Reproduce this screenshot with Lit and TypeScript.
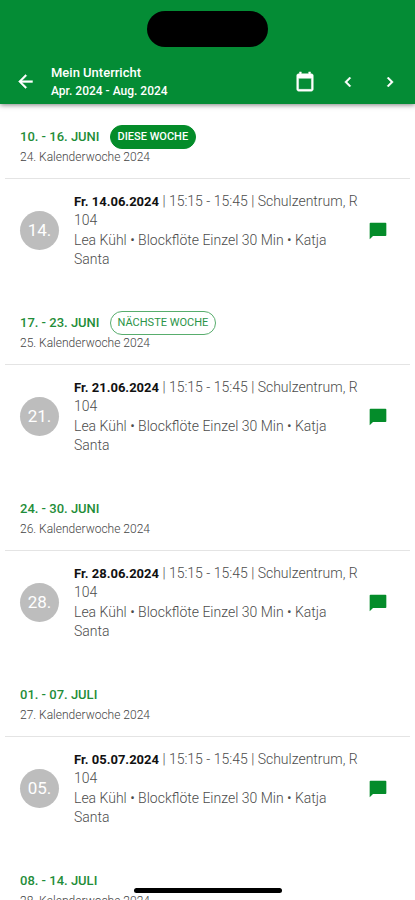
import { LitElement, html, css, nothing } from "lit";
import { customElement, property } from "lit/decorators.js";

interface Week {
  range: string;
  number: number;
  badge?: string;
  current?: boolean;
  day?: string;
  date?: string;
}

const weeks: Week[] = [
  { range: "10. - 16. JUNI", number: 24, badge: "DIESE WOCHE", current: true, day: "14.", date: "14.06.2024" },
  { range: "17. - 23. JUNI", number: 25, badge: "NÄCHSTE WOCHE", day: "21.", date: "21.06.2024" },
  { range: "24. - 30. JUNI", number: 26, day: "28.", date: "28.06.2024" },
  { range: "01. - 07. JULI", number: 27, day: "05.", date: "05.07.2024" },
  { range: "08. - 14. JULI", number: 28 },
];

@customElement("week-section")
export class WeekSection extends LitElement {
  @property({ attribute: false }) week!: Week;

  static styles = css`
    :host { display: block; }
    .head { padding: 20px 20px 13px; }
    .title { display: flex; align-items: center; gap: 10px; height: 24px; }
    .range { margin: 0; font-size: 13px; line-height: 22px; font-weight: 500; color: #1f8d39; }
    .badge {
      box-sizing: border-box;
      height: 24px;
      padding: 0 7px;
      border: 1px solid #58ad6d;
      border-radius: 12px;
      font-size: 11px;
      line-height: 22px;
      color: #2b9447;
    }
    .badge.current { background: #048c2a; border-color: #048c2a; color: #fff; font-weight: 500; }
    .number { margin: 0; font-size: 12px; line-height: 16px; font-weight: 300; color: #444; }
    .lesson {
      display: flex;
      align-items: center;
      margin: 0 5px;
      padding: 13px 15px 22px;
      border-top: 1px solid #e4e4e4;
    }
    .day {
      flex: none;
      width: 39px;
      height: 39px;
      border-radius: 50%;
      background: #bdbdbd;
      color: #fff;
      font-size: 17px;
      line-height: 39px;
      text-align: center;
    }
    .text { flex: 1; display: grid; gap: 1px; margin: 0 10px 0 15px; font-size: 14px; line-height: 19px; font-weight: 300; color: #4c4c4c; }
    .text p { margin: 0; white-space: nowrap; }
    .text b { font-size: 13px; font-weight: 700; color: #111; }
    .note { flex: none; border: 0; background: none; padding: 0; width: 20px; height: 20px; margin-right: 7px; }
    .note svg { display: block; fill: #048c2a; }
  `;

  render() {
    const w = this.week;
    return html`
      <header class="head">
        <div class="title">
          <h2 class="range">${w.range}</h2>
          ${w.badge ? html`<span class="badge ${w.current ? "current" : ""}">${w.badge}</span>` : nothing}
        </div>
        <p class="number">${w.number}. Kalenderwoche 2024</p>
      </header>
      ${w.date
        ? html`<article class="lesson">
            <div class="day">${w.day}</div>
            <div class="text">
              <p><b>Fr. ${w.date}</b> | 15:15 - 15:45 | Schulzentrum, R<br />104</p>
              <p>Lea Kühl • Blockflöte Einzel 30 Min • Katja<br />Santa</p>
            </div>
            <button class="note" aria-label="Nachricht">
              <svg width="20" height="20" viewBox="0 0 24 24"><path d="M21 2H3c-.6 0-1 .4-1 1v19l4-4h15c.6 0 1-.4 1-1V3c0-.6-.4-1-1-1z" /></svg>
            </button>
          </article>`
        : nothing}
    `;
  }
}

@customElement("app-root")
export class AppRoot extends LitElement {
  static styles = css`
    :host {
      display: flex;
      flex-direction: column;
      height: 100vh;
      position: relative;
      overflow: hidden;
      background: #fff;
      font-family: Roboto, "Liberation Sans", sans-serif;
    }
    .top { flex: none; background: #048c35; box-shadow: 0 1px 5px rgba(0, 0, 0, 0.5); z-index: 1; }
    .status { display: flex; justify-content: center; padding: 11px 0 12px; }
    .island { width: 121px; height: 36px; border-radius: 18px; background: #000; }
    .bar { display: flex; align-items: center; height: 45px; padding: 0 15px; color: #fff; }
    .titles { flex: 1; padding-left: 15px; }
    h1, .titles p { margin: 0; }
    h1 { font-size: 13px; line-height: 19px; font-weight: 500; }
    .titles p { font-size: 12px; line-height: 18px; font-weight: 500; }
    .icon { display: block; border: 0; padding: 0; background: none; color: #fff; }
    .icon svg { display: block; fill: currentColor; stroke: currentColor; stroke-width: 0.5; }
    .actions { display: flex; align-items: center; gap: 22px; }
    .list { flex: 1; padding-top: 1px; overflow-y: auto; scrollbar-width: none; }
    .home {
      position: absolute;
      bottom: 7px;
      left: 50%;
      width: 148px;
      height: 5px;
      margin-left: -74px;
      border-radius: 3px;
      background: #000;
    }
  `;

  render() {
    return html`
      <header class="top">
        <div class="status"><div class="island"></div></div>
        <div class="bar">
          <button class="icon" aria-label="Zurück">
            <svg width="21" height="21" viewBox="0 0 24 24"><path d="M20 11H7.830l5.590-5.590L12 4l-8 8 8 8 1.410-1.410L7.830 13H20v-2z" /></svg>
          </button>
          <div class="titles">
            <h1>Mein Unterricht</h1>
            <p>Apr. 2024 - Aug. 2024</p>
          </div>
          <div class="actions">
            <button class="icon" aria-label="Kalender">
              <svg width="22" height="22" viewBox="0 0 24 24"><path d="M19 3h-1V1h-2v2H8V1H6v2H5c-1.100 0-2 .9-2 2v15c0 1.100.9 2 2 2h14c1.100 0 2-.9 2-2V5c0-1.100-.9-2-2-2zm0 17H5V8h14v12z" /></svg>
            </button>
            <button class="icon" aria-label="Früher">
              <svg width="20" height="20" viewBox="0 0 24 24"><path d="M15.410 7.410 14 6l-6 6 6 6 1.410-1.410L10.830 12z" /></svg>
            </button>
            <button class="icon" aria-label="Später">
              <svg width="20" height="20" viewBox="0 0 24 24"><path d="M10 6 8.590 7.410 13.170 12l-4.580 4.590L10 18l6-6z" /></svg>
            </button>
          </div>
        </div>
      </header>
      <main class="list">${weeks.map((w) => html`<week-section .week=${w}></week-section>`)}</main>
      <div class="home"></div>
    `;
  }
}
